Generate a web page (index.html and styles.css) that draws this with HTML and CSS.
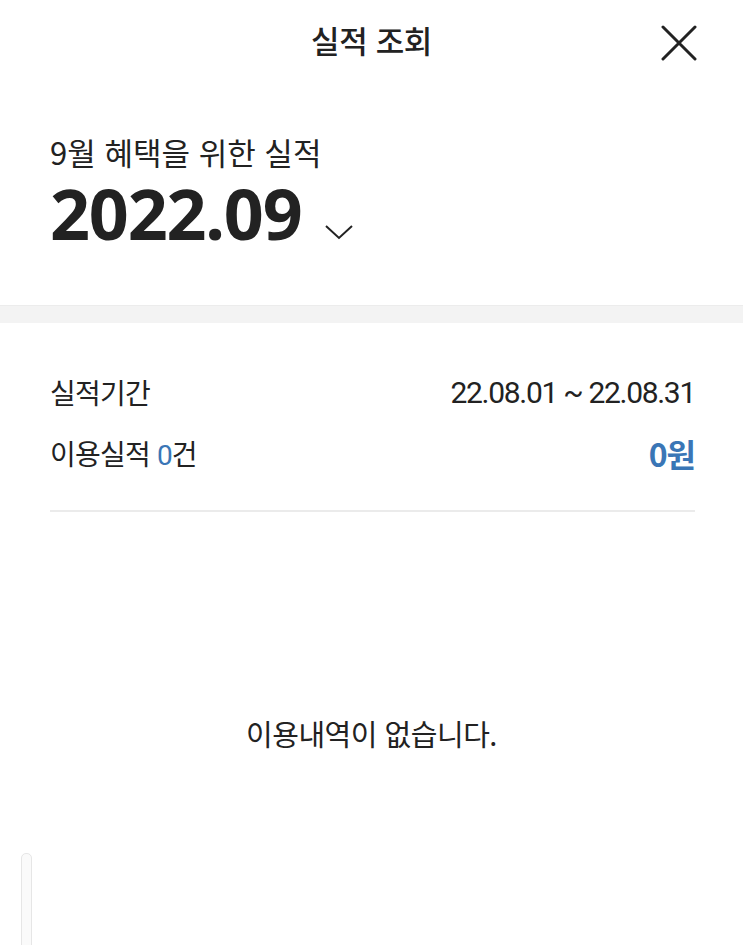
FILE: index.html
```html
<!DOCTYPE html>
<html lang="ko">
<head>
  <meta charset="UTF-8">
  <title>실적 조회</title>
  <link rel="stylesheet" href="styles.css">
</head>
<body>

<div class="page">
  <header class="top-bar">
    <h1 class="top-title">실적 조회</h1>
    <button class="close-btn" aria-label="닫기">
      <svg width="36" height="36" viewBox="0 0 36 36">
        <path d="M2 2 L34 34 M34 2 L2 34" stroke="#222" stroke-width="3" stroke-linecap="round" fill="none"/>
      </svg>
    </button>
  </header>

  <section class="month-box">
    <p class="month-caption">9월 혜택을 위한 실적</p>
    <div class="month-select">
      <span class="month-value">2022.09</span>
      <svg class="chevron" width="30" height="16" viewBox="0 0 30 16">
        <path d="M2 2 L15 14 L28 2" stroke="#222" stroke-width="2" fill="none"/>
      </svg>
    </div>
  </section>

  <div class="band"></div>

  <section class="summary">
    <div class="row">
      <span class="label">실적기간</span>
      <span class="value">22.08.01 ~ 22.08.31</span>
    </div>
    <div class="row">
      <span class="label">이용실적 <em class="count">0</em>건</span>
      <span class="amount">0원</span>
    </div>
  </section>

  <p class="empty">이용내역이 없습니다.</p>

  <div class="scroll-thumb"></div>
</div>

</body>
</html>
```

FILE: styles.css
```css
body {
  margin: 0;
  background: #fff;
  color: #222;
  font-family: "Noto Sans CJK KR", "Noto Sans", sans-serif;
}

.page {
  position: relative;
  width: 743px;
  height: 945px;
  overflow: hidden;
}

.top-bar {
  position: relative;
  height: 82px;
  display: flex;
  align-items: center;
  justify-content: center;
}

.top-title {
  margin: 0;
  font-size: 31px;
  font-weight: 500;
  letter-spacing: -0.4px;
  padding-bottom: 4px;
}

.close-btn {
  position: absolute;
  right: 46px;
  top: 25px;
  border: none;
  background: none;
  padding: 0;
  width: 36px;
  height: 36px;
  cursor: pointer;
}

.month-box {
  padding: 54px 50px 0;
  height: 169px;
}

.month-caption {
  margin: 0;
  font-size: 31px;
  font-weight: 400;
  line-height: 1;
  letter-spacing: 0;
}

.month-select {
  display: flex;
  align-items: center;
  margin-top: 8px;
}

.month-value {
  font-family: "Noto Sans", sans-serif;
  font-size: 70px;
  font-weight: 700;
  line-height: 1.1;
  letter-spacing: -1.2px;
}

.chevron {
  margin-left: 22px;
  margin-top: 36px;
}

.band {
  height: 17px;
  background: #f3f3f3;
  border-top: 1px solid #ececec;
}

.summary {
  margin: 0 48px 0 50px;
  padding-top: 50px;
  padding-bottom: 38px;
  border-bottom: 2px solid #ebebeb;
  display: flex;
  flex-direction: column;
  gap: 23px;
}

.row {
  display: flex;
  justify-content: space-between;
  align-items: center;
  height: 38px;
  font-size: 28px;
  letter-spacing: -0.8px;
}

.value {
  font-family: "Roboto", sans-serif;
  font-size: 30px;
  letter-spacing: -1.3px;
}

.count {
  font-style: normal;
  color: #3a76b6;
  font-family: "Roboto", sans-serif;
}

.amount {
  color: #3a76b6;
  font-weight: 700;
  font-size: 32px;
  letter-spacing: -1px;
}

.empty {
  margin: 200px 0 0;
  text-align: center;
  font-size: 29px;
  letter-spacing: -0.5px;
}

.scroll-thumb {
  position: absolute;
  left: 21px;
  top: 853px;
  width: 9px;
  height: 110px;
  border: 1px solid #e6e6e6;
  border-radius: 5px;
  background: #fafafa;
}
```
